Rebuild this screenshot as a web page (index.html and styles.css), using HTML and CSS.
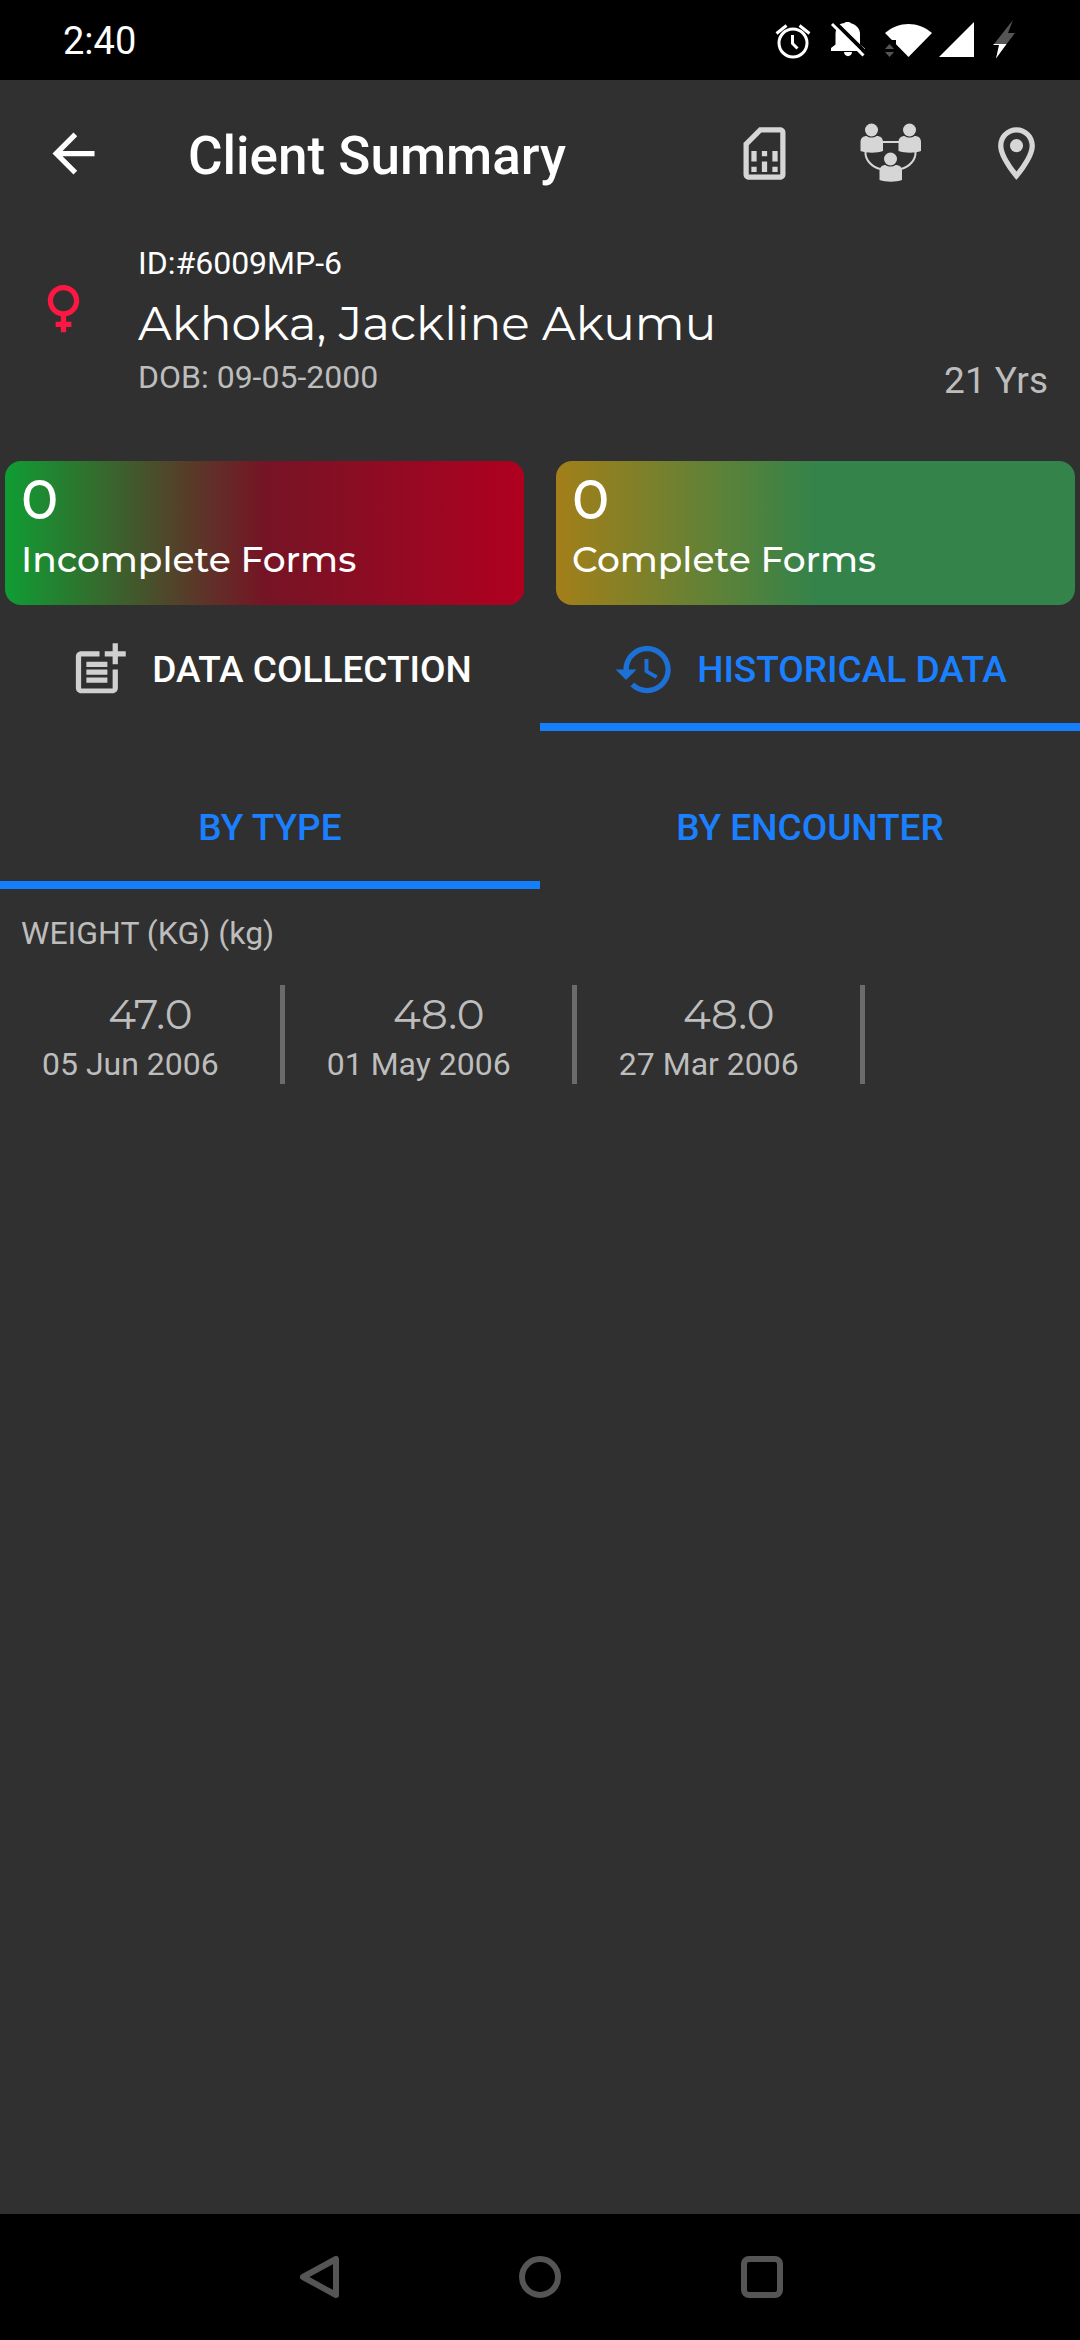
FILE: index.html
```html
<!DOCTYPE html>
<html lang="en">
<head>
    <meta charset="UTF-8">
    <meta name="viewport" content="width=device-width, initial-scale=1.0">
    <title>Client Summary</title>
    <link rel="stylesheet" href="styles.css">
</head>
<body>
    <div class="status-bar">
        <span class="clock">2:40</span>
        <div class="status-icons">
            <svg width="36" height="40" viewBox="0 0 36 40" fill="none" stroke="#fff">
                <circle cx="18" cy="23" r="14" stroke-width="3"/>
                <path d="M17.500 15v8.500l5 5" stroke-width="3"/>
                <path d="M1.500 13.500l10-8M34.500 13.500l-10-8" stroke-width="3"/>
            </svg>
            <svg width="36" height="40" viewBox="0 0 36 40">
                <path fill="#fff" d="M9 4.500C11 3.500 13 3.300 14 3.200C15 1.600 20 1.600 21 3.200C27 5 30 9 30 14v10.500l5 4v2.500H1v-3l4.500-3.500V14c0-3 1-6 3.500-9.500zM14 32h8c0 5.500-8 5.500-8 0z"/>
                <path stroke="#000" stroke-width="4" d="M4 1.500L36 33"/>
                <path stroke="#fff" stroke-width="3" d="M2 4L33.500 35.500"/>
            </svg>
            <svg width="47" height="40" viewBox="0 0 47 40">
                <path fill="#fff" d="M0 13C14 1 33 1 47 13L23.500 37z"/>
                <path fill="#000" d="M0 20h11v20H0z"/>
                <path fill="#555" d="M0 29l4.500-5 4.500 5zM0 32h9l-4.500 5z"/>
            </svg>
            <svg class="signal" width="35" height="40" viewBox="0 0 35 40">
                <path fill="#fff" d="M0 37L35 2v35z"/>
            </svg>
            <svg class="bolt" width="23" height="40" viewBox="0 0 23 40">
                <path fill="#555" d="M20 0L1 24h7L3 38 22 13h-7z"/>
                <path fill="#fff" d="M1 24h12.500L3 38.500 6 25H0z"/>
            </svg>
        </div>
    </div>

    <header class="toolbar">
        <button class="icon-btn" aria-label="Back">
            <svg width="63" height="63" viewBox="0 0 24 24"><path fill="#fff" d="M20 11H7.830l5.590-5.590L12 4l-8 8 8 8 1.410-1.410L7.830 13H20v-2z"/></svg>
        </button>
        <h1>Client Summary</h1>
        <div class="actions">
            <button class="icon-btn" aria-label="SIM card">
                <svg width="63" height="63" viewBox="0 0 24 24" fill="#d6d6d6"><path d="M18 2h-8L4 8v12c0 1.100.9 2 2 2h12c1.100 0 2-.9 2-2V4c0-1.100-.9-2-2-2zm0 18H6V8.830L10.830 4H18v16z"/><path d="M7 17h2v2H7zM15 17h2v2h-2zM7 11h2v4H7zM11 15h2v4h-2zM11 11h2v2h-2zM15 11h2v4h-2z"/></svg>
            </button>
            <button class="icon-btn" aria-label="Relationships">
                <svg width="63" height="63" viewBox="0 0 63 63" fill="#d6d6d6">
                    <path fill="none" stroke="#d6d6d6" stroke-width="2" d="M22 20h20M6.500 30C6 38 13 45 21 47M56.500 30C57 38 50 45 42 47"/>
                    <g id="person">
                        <circle cx="12.500" cy="8" r="6.500"/>
                        <path d="M1.500 29V20c0-4 3-6 6-6 3 2 7 2 10 0 4 0 6.500 2 6.500 6v9c-6 2.300-16 2.300-22.500 0z"/>
                    </g>
                    <use href="#person" x="38"/>
                    <use href="#person" x="19" y="29"/>
                </svg>
            </button>
            <button class="icon-btn" aria-label="Location">
                <svg width="63" height="63" viewBox="0 0 24 24" fill="#d6d6d6"><path d="M12 2C8.130 2 5 5.130 5 9c0 5.250 7 13 7 13s7-7.750 7-13c0-3.870-3.130-7-7-7zM7 9c0-2.760 2.240-5 5-5s5 2.240 5 5c0 2.880-2.880 7.190-5 9.880C9.920 16.210 7 11.850 7 9z"/><circle cx="12" cy="9" r="2.500"/></svg>
            </button>
        </div>
    </header>

    <main>
        <section class="client">
            <svg class="gender" width="63" height="63" viewBox="0 0 24 24" fill="#ff1744"><path d="M18 9c0-3.310-2.690-6-6-6S6 5.690 6 9c0 2.970 2.160 5.430 5 5.910V17H9v2h2v2h2v-2h2v-2h-2v-2.090c2.840-.48 5-2.940 5-5.910zM8 9c0-2.210 1.790-4 4-4s4 1.790 4 4-1.790 4-4 4-4-1.790-4-4z"/></svg>
            <div class="client-info">
                <div class="client-id">ID:#6009MP-6</div>
                <h2>Akhoka, Jackline Akumu</h2>
                <div class="dob">DOB: 09-05-2000</div>
            </div>
            <div class="age">21 Yrs</div>
        </section>

        <section class="cards">
            <div class="card incomplete">
                <div class="count">0</div>
                <div class="card-label">Incomplete Forms</div>
            </div>
            <div class="card complete">
                <div class="count">0</div>
                <div class="card-label">Complete Forms</div>
            </div>
        </section>

        <nav class="tabs">
            <button class="tab">
                <svg width="63" height="63" viewBox="0 0 24 24" fill="#d0d0d0"><path d="M17 19.220H5V7h7V5H5c-1.100 0-2 .9-2 2v12c0 1.100.9 2 2 2h12c1.100 0 2-.9 2-2v-7h-2v7.220z"/><path d="M19 2h-2v3h-3c.01.010 0 2 0 2h3v2.990c.01.010 2 0 2 0V7h3V5h-3V2zM7 9h8v2H7zM7 12h8v2H7zM7 15h8v2H7z"/></svg>
                Data Collection
            </button>
            <button class="tab blue active">
                <svg width="63" height="63" viewBox="0 0 24 24" fill="#1c70d6"><path d="M13 3c-4.970 0-9 4.030-9 9H1l3.890 3.890.07.14L9 12H6c0-3.870 3.130-7 7-7s7 3.130 7 7-3.130 7-7 7c-1.930 0-3.680-.79-4.940-2.060l-1.420 1.420C8.270 19.990 10.510 21 13 21c4.970 0 9-4.030 9-9s-4.030-9-9-9zm-1 5v5l4.280 2.540.72-1.210-3.500-2.080V8H12z"/></svg>
                Historical Data
            </button>
        </nav>

        <nav class="tabs sub-tabs">
            <button class="tab blue active">By Type</button>
            <button class="tab blue">By Encounter</button>
        </nav>

        <section class="history">
            <h3>WEIGHT (KG) (kg)</h3>
            <div class="readings">
                <div class="reading">
                    <div class="value">47.0</div>
                    <div class="date">05 Jun 2006</div>
                </div>
                <div class="reading">
                    <div class="value">48.0</div>
                    <div class="date">01 May 2006</div>
                </div>
                <div class="reading">
                    <div class="value">48.0</div>
                    <div class="date">27 Mar 2006</div>
                </div>
            </div>
        </section>
    </main>

    <footer class="nav-bar">
        <button class="icon-btn" aria-label="Back">
            <svg width="48" height="48" viewBox="0 0 48 48" fill="none" stroke="#555" stroke-width="6" stroke-linejoin="round"><path d="M42 6v36L9 24z"/></svg>
        </button>
        <button class="icon-btn" aria-label="Home">
            <svg width="48" height="48" viewBox="0 0 48 48" fill="none" stroke="#555" stroke-width="6"><circle cx="24" cy="24" r="18"/></svg>
        </button>
        <button class="icon-btn" aria-label="Recent apps">
            <svg width="48" height="48" viewBox="0 0 48 48" fill="none" stroke="#555" stroke-width="6"><rect x="6" y="6" width="36" height="36" rx="5"/></svg>
        </button>
    </footer>
</body>
</html>
```
FILE: styles.css
```css
* {
    box-sizing: border-box;
}

body {
    margin: 0;
    min-height: 100vh;
    display: flex;
    flex-direction: column;
    background-color: #303030;
    color: #fff;
    font-family: Roboto, "Liberation Sans", sans-serif;
    font-size: 32px;
}

h1, h2, h3 {
    margin: 0;
}

button {
    border: none;
    padding: 0;
    background: none;
    color: inherit;
    font-family: inherit;
    cursor: pointer;
}

svg {
    display: block;
    flex: none;
}

/* status bar */
.status-bar {
    height: 80px;
    padding: 0 64px 0 63px;
    display: flex;
    align-items: center;
    justify-content: space-between;
    background: #000;
}

.clock {
    padding-top: 2px;
    font-size: 38px;
}

.status-icons {
    display: flex;
    gap: 19px;
}

.signal {
    margin-left: -12px;
}

/* toolbar */
.toolbar {
    height: 147px;
    padding: 0 32px 0 42px;
    display: flex;
    align-items: center;
}

.toolbar h1 {
    flex: 1;
    margin-left: 83px;
    line-height: 60px;
    padding-top: 4px;
    font-size: 53px;
    font-weight: 500;
}

.actions {
    display: flex;
    gap: 63px;
}

/* client details */
.client {
    padding: 16px 32px 0;
    display: flex;
    align-items: flex-start;
}

.gender {
    margin-top: 34px;
}

.client-info {
    flex: 1;
    margin-left: 43px;
}

.client-id, .dob {
    line-height: 40px;
}

.client h2 {
    padding-top: 8px;
    line-height: 66px;
    font-family: Montserrat, Inter, sans-serif;
    font-size: 47px;
    font-weight: 400;
}

.dob, .age {
    color: #bdbdbd;
}

.age {
    align-self: flex-end;
    line-height: 32px;
    font-size: 37px;
}

/* form counters */
.cards {
    display: grid;
    grid-template-columns: 1fr 1fr;
    gap: 32px;
    margin-top: 64px;
    padding: 0 5px;
}

.card {
    height: 144px;
    padding: 8px 16px;
    border-radius: 16px;
    font-family: Montserrat, Inter, sans-serif;
    font-weight: 500;
}

.incomplete {
    background: linear-gradient(to right, #0f9d33, #751425 50%, #b00020);
}

.complete {
    background: linear-gradient(to right, #a37f19, #34834a 50%);
}

.count {
    line-height: 60px;
    font-size: 56px;
}

.card-label {
    line-height: 60px;
    font-size: 36px;
}

/* tabs */
.tabs {
    display: grid;
    grid-template-columns: 1fr 1fr;
}

.sub-tabs {
    margin-top: 32px;
}

.tab {
    height: 126px;
    padding-top: 2px;
    display: flex;
    align-items: center;
    justify-content: center;
    gap: 21px;
    font-size: 37px;
    font-weight: 500;
    text-transform: uppercase;
}

.blue {
    color: #1a80ff;
}

.active {
    box-shadow: inset 0 -8px #147efb;
}

/* history */
.history {
    color: #bdbdbd;
}

.history h3 {
    margin: 24px 21px 32px;
    line-height: 40px;
    font-size: 32px;
    font-weight: 400;
}

.readings {
    display: flex;
}

.reading {
    height: 99px;
    padding: 8px 61px 0 42px;
    border-right: 5px solid #6b6b6b;
}

.value {
    padding-left: 40px;
    line-height: 42px;
    font-family: Montserrat, Inter, sans-serif;
    font-size: 42px;
    font-weight: 400;
    text-align: center;
}

.date {
    padding-top: 8px;
    line-height: 42px;
}

/* system navigation */
.nav-bar {
    height: 126px;
    margin-top: auto;
    display: flex;
    align-items: center;
    justify-content: center;
    gap: 174px;
    background: #000;
}
```
